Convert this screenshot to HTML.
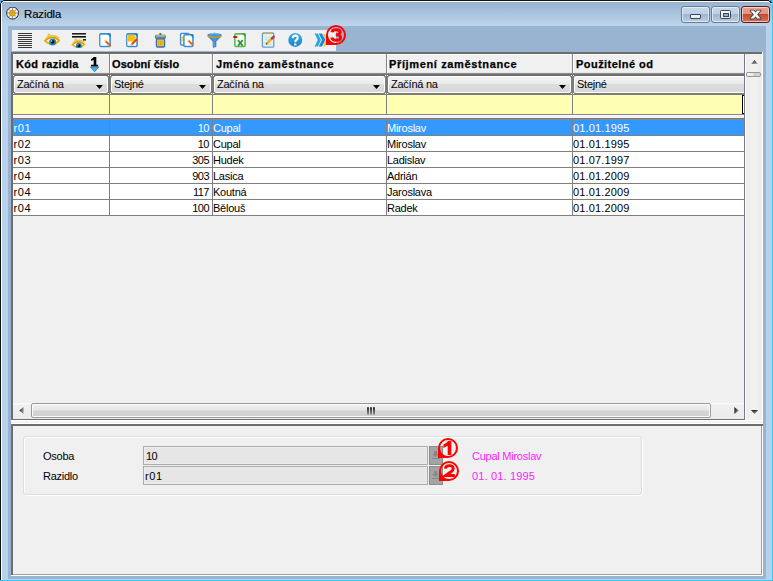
<!DOCTYPE html>
<html><head><meta charset="utf-8">
<style>
*{box-sizing:border-box;margin:0;padding:0}
html,body{width:773px;height:581px;overflow:hidden;background:#b9d1ea}
body{position:relative;font-family:"Liberation Sans",sans-serif;font-size:11px;color:#000}
.a{position:absolute}
.t{position:absolute;white-space:nowrap;line-height:13px}
</style></head><body>
<div class="a" style="left:0px;top:0px;width:773px;height:581px;background:#b9d1ea"></div>
<div class="a" style="left:0px;top:2px;width:772px;height:24px;background:linear-gradient(#99b4d1,#bdd4eb)"></div>
<div class="a" style="left:0px;top:0px;width:772px;height:1px;background:#141414"></div>
<div class="a" style="left:0px;top:0px;width:1px;height:580px;background:#141414"></div>
<div class="a" style="left:1px;top:1px;width:771px;height:1px;background:#fff"></div>
<div class="a" style="left:1px;top:1px;width:1px;height:579px;background:#fff"></div>
<div class="a" style="left:772px;top:0px;width:1px;height:581px;background:#2fcdef"></div>
<div class="a" style="left:0px;top:580px;width:773px;height:1px;background:#2fcdef"></div>
<div class="a" style="left:8px;top:26px;width:758px;height:553px;background:#99b4d1"></div>
<div class="a" style="left:0px;top:0px;width:1px;height:1px;background:#5aa8f0"></div>
<div class="a" style="left:1px;top:0px;width:1px;height:1px;background:#5aa8f0"></div>
<div class="a" style="left:2px;top:0px;width:1px;height:1px;background:#5aa8f0"></div>
<div class="a" style="left:3px;top:0px;width:1px;height:1px;background:#3a3a3a"></div>
<div class="a" style="left:0px;top:1px;width:1px;height:1px;background:#5aa8f0"></div>
<div class="a" style="left:0px;top:2px;width:1px;height:1px;background:#5aa8f0"></div>
<div class="a" style="left:0px;top:3px;width:1px;height:1px;background:#3a3a3a"></div>
<div class="a" style="left:1px;top:1px;width:1px;height:1px;background:#2a2a2a"></div>
<div class="a" style="left:2px;top:1px;width:1px;height:1px;background:#2a2a2a"></div>
<div class="a" style="left:1px;top:2px;width:1px;height:1px;background:#2a2a2a"></div>
<div class="a" style="left:2px;top:2px;width:1px;height:1px;background:#cfdbe8"></div>
<div class="a" style="left:769px;top:0px;width:1px;height:1px;background:#5aa8f0"></div>
<div class="a" style="left:770px;top:0px;width:1px;height:1px;background:#5aa8f0"></div>
<div class="a" style="left:771px;top:0px;width:1px;height:1px;background:#5aa8f0"></div>
<div class="a" style="left:769px;top:1px;width:1px;height:1px;background:#2a2a2a"></div>
<div class="a" style="left:770px;top:1px;width:1px;height:1px;background:#2a2a2a"></div>
<div class="a" style="left:771px;top:1px;width:1px;height:1px;background:#5aa8f0"></div>
<div class="a" style="left:770px;top:2px;width:1px;height:1px;background:#2a2a2a"></div>
<div class="a" style="left:771px;top:2px;width:1px;height:1px;background:#2a2a2a"></div>
<div class="a" style="left:769px;top:2px;width:1px;height:1px;background:#cfe8f0"></div>
<div class="a" style="left:771px;top:3px;width:1px;height:1px;background:#bfe8f5"></div>
<div class="t" style="left:24px;top:8px;font-size:11.4px;-webkit-text-stroke:0.15px #000;letter-spacing:-0.1px">Razidla</div>
<svg class="a" style="left:6px;top:7px" width="13" height="13" viewBox="0 0 13 13"><circle cx="6.6" cy="6.1" r="6" fill="#f2f2f2" stroke="#1e1e28" stroke-width="0.9"/><path d="M6.6 6.1 L12.60 6.10" stroke="#50505a" stroke-width="0.6"/><path d="M6.6 6.1 L10.84 10.34" stroke="#50505a" stroke-width="0.6"/><path d="M6.6 6.1 L6.60 12.10" stroke="#50505a" stroke-width="0.6"/><path d="M6.6 6.1 L2.36 10.35" stroke="#50505a" stroke-width="0.6"/><path d="M6.6 6.1 L0.60 6.11" stroke="#50505a" stroke-width="0.6"/><path d="M6.6 6.1 L2.35 1.87" stroke="#50505a" stroke-width="0.6"/><path d="M6.6 6.1 L6.59 0.10" stroke="#50505a" stroke-width="0.6"/><path d="M6.6 6.1 L10.83 1.85" stroke="#50505a" stroke-width="0.6"/><circle cx="6.4" cy="6.2" r="2.9" fill="#f2b800" stroke="#5a4a20" stroke-width="0.4"/><circle cx="6.2" cy="6" r="0.8" fill="#a07010"/></svg>
<div class="a" style="left:681px;top:6px;width:29px;height:17px;background:linear-gradient(#c6d7ea 0%,#bdd0e5 45%,#9cb6d1 46%,#b8cde3 100%);border:1px solid #6a7d92;border-radius:3px;box-shadow:inset 0 0 0 1px rgba(255,255,255,.55)"></div>
<div class="a" style="left:690px;top:14px;width:11px;height:5px;background:#eee;border:1px solid #3c4656;border-radius:1px"></div>
<div class="a" style="left:711px;top:6px;width:29px;height:17px;background:linear-gradient(#c6d7ea 0%,#bdd0e5 45%,#9cb6d1 46%,#b8cde3 100%);border:1px solid #6a7d92;border-radius:3px;box-shadow:inset 0 0 0 1px rgba(255,255,255,.55)"></div>
<div class="a" style="left:720px;top:10px;width:11px;height:9px;background:linear-gradient(#fafafa,#e6e6e6);border:1px solid #3c4656;border-radius:1.5px"></div><div class="a" style="left:723px;top:13px;width:6px;height:4px;background:#8ab0d0;border:1px solid #3c4656"></div>
<div class="a" style="left:741px;top:6px;width:29px;height:17px;background:linear-gradient(#e8a190 0%,#e19580 45%,#c44a2c 46%,#d86f55 100%);border:1px solid #5a1d1d;border-radius:3px;box-shadow:inset 0 0 0 1px rgba(255,255,255,.55)"></div>
<svg class="a" style="left:749px;top:9px" width="13" height="11" viewBox="0 0 13 11"><g stroke="#343c4c" stroke-width="1.6" stroke-linejoin="round" fill="#343c4c"><path d="M1.4 1.6 H4.7 L11.6 9.6 H8.3 Z"/><path d="M8.3 1.6 H11.6 L4.7 9.6 H1.4 Z"/></g><g fill="#f8f8f8"><path d="M1.4 1.6 H4.7 L11.6 9.6 H8.3 Z"/><path d="M8.3 1.6 H11.6 L4.7 9.6 H1.4 Z"/></g></svg>
<div class="a" style="left:12px;top:30px;width:324px;height:21px;background:#f0f0f0"></div>
<svg class="a" style="left:17px;top:32px" width="16" height="16" viewBox="0 0 16 16"><rect x="1" y="1" width="14" height="1" fill="#3a3a3a"/><rect x="1" y="3" width="14" height="1" fill="#3a3a3a"/><rect x="1" y="5" width="14" height="1" fill="#3a3a3a"/><rect x="1" y="7" width="14" height="1" fill="#3a3a3a"/><rect x="1" y="9" width="14" height="1" fill="#3a3a3a"/><rect x="1" y="11" width="14" height="1" fill="#3a3a3a"/><rect x="1" y="13" width="14" height="1" fill="#3a3a3a"/><rect x="1" y="15" width="14" height="1" fill="#3a3a3a"/></svg>
<svg class="a" style="left:44px;top:32px" width="16" height="16" viewBox="0 0 16 16"><path d="M0.9 8.8 Q7 1.8 15.3 8.4 Q9 15.8 0.9 8.8 Z" fill="#f4f4f0" stroke="#e4aa08" stroke-width="1.7"/><path d="M1.6 6.6 Q8 0.6 15.2 6.2" fill="none" stroke="#eec030" stroke-width="1.3"/><path d="M2.5 8 Q8 3.6 14.5 7.6" fill="none" stroke="#d89a00" stroke-width="0.9"/><circle cx="8.6" cy="10.1" r="3.5" fill="#2886b4"/><circle cx="8.7" cy="9.9" r="1.8" fill="#050505"/><circle cx="7.7" cy="9" r="0.7" fill="#fff"/><path d="M3.8 4.2 L4.6 1.6 M5.4 3.3 L5.8 1.8" stroke="#e4aa08" stroke-width="0.9"/></svg>
<svg class="a" style="left:71px;top:32px" width="16" height="16" viewBox="0 0 16 16"><rect x="1" y="1" width="14" height="1.6" fill="#222"/><rect x="1" y="4" width="14" height="1.6" fill="#111"/><rect x="12" y="7" width="3" height="1.6" fill="#222"/><g transform="translate(0.5,5.2) scale(0.85)"><path d="M0.9 8.8 Q7 1.8 15.3 8.4 Q9 15.8 0.9 8.8 Z" fill="#f4f4f0" stroke="#e4aa08" stroke-width="1.7"/><path d="M1.6 6.6 Q8 0.6 15.2 6.2" fill="none" stroke="#eec030" stroke-width="1.3"/><path d="M2.5 8 Q8 3.6 14.5 7.6" fill="none" stroke="#d89a00" stroke-width="0.9"/><circle cx="8.6" cy="10.1" r="3.5" fill="#2886b4"/><circle cx="8.7" cy="9.9" r="1.8" fill="#050505"/><circle cx="7.7" cy="9" r="0.7" fill="#fff"/><path d="M3.8 4.2 L4.6 1.6 M5.4 3.3 L5.8 1.8" stroke="#e4aa08" stroke-width="0.9"/></g></svg>
<svg class="a" style="left:98px;top:32px" width="16" height="16" viewBox="0 0 16 16"><rect x="1.9" y="1.9" width="10.2" height="12.6" rx="1.2" fill="#fff" stroke="#3a8fd2" stroke-width="1.6"/><path d="M8.8 1.4 H12.6 V5.2 Z" fill="#1f7cc8"/><path d="M2.9 3 V13.6" stroke="#d8ecfa" stroke-width="1"/><path d="M7.6 9.2 L12.6 14" stroke="#e2601c" stroke-width="2"/><path d="M6.6 8.2 L7.8 9.4" stroke="#f0d088" stroke-width="1.8"/></svg>
<svg class="a" style="left:125px;top:32px" width="16" height="16" viewBox="0 0 16 16"><rect x="1.9" y="1.9" width="10.2" height="12.6" rx="1.2" fill="#fff" stroke="#3a8fd2" stroke-width="1.6"/><path d="M8.8 1.4 H12.6 V5.2 Z" fill="#1f7cc8"/><path d="M2.9 3 V13.6" stroke="#d8ecfa" stroke-width="1"/><path d="M3 3 H9.5 L10.6 4.6 V9.4 H3 Z" fill="#f8c00e"/><path d="M6.8 12.2 L12.2 7" stroke="#d84a1a" stroke-width="2"/><path d="M5.8 13.2 L6.9 12.1" stroke="#d8b060" stroke-width="1.6"/></svg>
<svg class="a" style="left:152px;top:32px" width="16" height="16" viewBox="0 0 16 16"><rect x="4.4" y="6.8" width="8.2" height="8.2" rx="1.2" fill="#f4c21c" stroke="#3a70b8" stroke-width="1.3"/><rect x="3.4" y="3.2" width="10" height="3.4" rx="0.8" fill="#4a86c8" stroke="#3a70b8" stroke-width="0.8"/><rect x="4" y="3.3" width="8.8" height="1.3" fill="#f6c820"/><rect x="7.2" y="1.1" width="2.4" height="2" rx="0.8" fill="#3a70b8"/><path d="M6.7 8.5 V13.5 M8.5 8.5 V13.5 M10.3 8.5 V13.5" stroke="#d9a214" stroke-width="0.8"/></svg>
<svg class="a" style="left:179px;top:32px" width="16" height="16" viewBox="0 0 16 16"><rect x="1.6" y="1.4" width="8.6" height="11.6" rx="1" fill="#fff" stroke="#3a8fd2" stroke-width="1.4"/><rect x="2.6" y="5" width="1.2" height="4.5" fill="#f6c21a"/><rect x="4.9" y="2.7" width="9" height="11.8" rx="1" fill="#fff" stroke="#3a8fd2" stroke-width="1.5"/><path d="M10.6 2.2 H14.3 V5.9 Z" fill="#1f7cc8"/><path d="M9.4 8.6 L13.8 13" stroke="#e2601c" stroke-width="1.9"/><path d="M8.6 7.8 L9.6 8.8" stroke="#f0d088" stroke-width="1.6"/></svg>
<svg class="a" style="left:206px;top:32px" width="16" height="16" viewBox="0 0 16 16"><path d="M1.8 2.6 Q8.5 -0.4 15.2 2.6 L15 4.4 L10 9.4 L10 14.6 L7.2 15.4 L7 9.4 L2 4.4 Z" fill="#3a96d8" stroke="#2868a8" stroke-width="0.6"/><path d="M2 4.2 Q8.5 6.2 15 4.2" fill="none" stroke="#e49a0c" stroke-width="1.4"/><path d="M3.5 2.2 Q8.5 0.8 13.5 2.2" fill="none" stroke="#8ccaf2" stroke-width="1"/><path d="M8 10 V14.5" stroke="#6ab8ee" stroke-width="0.8"/></svg>
<svg class="a" style="left:233px;top:32px" width="16" height="16" viewBox="0 0 16 16"><rect x="1.9" y="1.9" width="10.2" height="12.6" rx="1.2" fill="#fff" stroke="#5cb452" stroke-width="1.6"/><path d="M8.8 1.4 H12.6 V5.2 Z" fill="#3aa040"/><rect x="0.3" y="4" width="4" height="2" rx="0.6" fill="#cc1010"/><path d="M4.9 8.2 L9.8 13.8 M9.6 8.2 L4.9 13.8" stroke="#2a9a34" stroke-width="1.8"/></svg>
<svg class="a" style="left:260px;top:32px" width="16" height="16" viewBox="0 0 16 16"><rect x="2.4" y="1" width="11.4" height="14.2" rx="1.2" fill="#e6f3fb" stroke="#6c9cc6" stroke-width="1.3"/><path d="M4 5.2 H12.5 M4 7.6 H12.5 M4 10 H12.5 M4 12.4 H12.5" stroke="#bcdaee" stroke-width="0.8"/><path d="M4 1.4 h1.6 M7 1.4 h1.6 M10 1.4 h1.6" stroke="#e8b830" stroke-width="1.6"/><path d="M7 11.4 L12.2 6.2" stroke="#f2b412" stroke-width="2.6"/><path d="M12 6.4 L13.6 4.8" stroke="#c83030" stroke-width="2.4" stroke-linecap="round"/><path d="M6.2 12.2 L7.2 11.2" stroke="#704020" stroke-width="1.6"/></svg>
<svg class="a" style="left:287px;top:32px" width="16" height="16" viewBox="0 0 16 16"><defs><linearGradient id="hg" x1="0" y1="0" x2="0" y2="1"><stop offset="0" stop-color="#3cace8"/><stop offset="1" stop-color="#1984c6"/></linearGradient></defs><circle cx="8.25" cy="7.9" r="7" fill="url(#hg)"/><path d="M5.8 6.1 Q5.9 3.6 8.4 3.6 Q10.9 3.7 10.7 6 Q10.5 7.3 9.2 8.1 Q8.2 8.8 8.3 10.2" fill="none" stroke="#fff" stroke-width="2"/><rect x="7.2" y="11.5" width="2.2" height="2" fill="#fff"/></svg>
<svg class="a" style="left:314px;top:32px" width="16" height="16" viewBox="0 0 16 16"><path d="M0.6 1.4 H3.8 L7 8 L3.8 14.6 H0.6 L3.8 8 Z" fill="#22a8e6"/><path d="M4.7 1.4 H8 L11.4 8 L8 14.6 H4.7 L8 8 Z" fill="#1c8ad0"/><path d="M9.2 2 H10.8 L13.4 8 L10.8 14.6 H9.2 L11.8 8 Z" fill="#f4c010"/></svg>
<div class="a" style="left:11px;top:52px;width:752px;height:372px;background:#ffffff"></div>
<div class="a" style="left:11px;top:52px;width:751px;height:2px;background:#6d6d6d"></div>
<div class="a" style="left:11px;top:52px;width:2px;height:368px;background:#6d6d6d"></div>
<div class="a" style="left:13px;top:54px;width:732px;height:366px;background:#767b82"></div>
<div class="a" style="left:13px;top:54px;width:731px;height:365px;background:#f0f0f0"></div>
<div class="a" style="left:11px;top:419px;width:734px;height:1px;background:#6f6f6f"></div>
<div class="a" style="left:11px;top:421px;width:752px;height:2px;background:#f3f3f3"></div>
<div class="a" style="left:13px;top:54px;width:731px;height:19px;background:#f0f0f0"></div>
<div class="a" style="left:13px;top:54px;width:731px;height:1px;background:#ffffff"></div>
<div class="a" style="left:13px;top:73px;width:731px;height:22px;background:#7c7c7c"></div>
<div class="a" style="left:13px;top:73px;width:731px;height:1px;background:#8e8e8e"></div>
<div class="a" style="left:13px;top:74px;width:731px;height:2px;background:#6e6e6e"></div>
<div class="a" style="left:13px;top:72px;width:731px;height:1px;background:#e6e6e6"></div>
<div class="a" style="left:109px;top:54px;width:1px;height:19px;background:#858585"></div>
<div class="a" style="left:110px;top:54px;width:1px;height:19px;background:#ffffff"></div>
<div class="a" style="left:212px;top:54px;width:1px;height:19px;background:#858585"></div>
<div class="a" style="left:213px;top:54px;width:1px;height:19px;background:#ffffff"></div>
<div class="a" style="left:386px;top:54px;width:1px;height:19px;background:#858585"></div>
<div class="a" style="left:387px;top:54px;width:1px;height:19px;background:#ffffff"></div>
<div class="a" style="left:572px;top:54px;width:1px;height:19px;background:#858585"></div>
<div class="a" style="left:573px;top:54px;width:1px;height:19px;background:#ffffff"></div>
<div class="t" style="left:16px;top:58px;font-size:11px;font-weight:bold;letter-spacing:0.32px;-webkit-text-stroke:0.25px #000">Kód razidla</div>
<div class="t" style="left:112px;top:58px;font-size:11px;font-weight:bold;letter-spacing:0.1px;-webkit-text-stroke:0.25px #000">Osobní číslo</div>
<div class="t" style="left:216px;top:58px;font-size:11px;font-weight:bold;letter-spacing:0.62px;-webkit-text-stroke:0.25px #000">Jméno zaměstnance</div>
<div class="t" style="left:389px;top:58px;font-size:11px;font-weight:bold;letter-spacing:0.64px;-webkit-text-stroke:0.25px #000">Příjmení zaměstnance</div>
<div class="t" style="left:576px;top:58px;font-size:11px;font-weight:bold;letter-spacing:0.45px;-webkit-text-stroke:0.25px #000">Použitelné od</div>
<svg class="a" style="left:90px;top:56px" width="10" height="11" viewBox="0 0 10 11"><path d="M3.7 0.9 H6.3 V8.7 H8.1 V10.5 H1 V8.7 H3.7 V3.9 Q2.5 4.5 1.1 4.7 V2.9 Q3 2.3 3.7 0.9 Z" fill="#000"/></svg>
<svg class="a" style="left:90px;top:66px" width="10" height="7" viewBox="0 0 10 7"><path d="M0.3 0.9 H9 L4.6 5.8 Z" fill="#35b8f0" stroke="#1a4a78" stroke-width="0.5"/></svg>
<div class="a" style="left:14px;top:76px;width:94px;height:17px;background:linear-gradient(#f3f3f3 0%,#ececec 42%,#dedede 50%,#d7d7d7 100%);border:1px solid #fff;border-radius:2px;"></div>
<div class="t" style="left:17px;top:78px;font-size:11px;letter-spacing:-0.25px;">Začíná na</div>
<svg class="a" style="left:96px;top:85px" width="7" height="4"><path d="M0 0 L7 0 L3.5 4 Z" fill="#000"/></svg>
<div class="a" style="left:111px;top:76px;width:100px;height:17px;background:linear-gradient(#f3f3f3 0%,#ececec 42%,#dedede 50%,#d7d7d7 100%);border:1px solid #fff;border-radius:2px;"></div>
<div class="t" style="left:114px;top:78px;font-size:11px;letter-spacing:-0.25px;">Stejné</div>
<svg class="a" style="left:199px;top:85px" width="7" height="4"><path d="M0 0 L7 0 L3.5 4 Z" fill="#000"/></svg>
<div class="a" style="left:214px;top:76px;width:171px;height:17px;background:linear-gradient(#f3f3f3 0%,#ececec 42%,#dedede 50%,#d7d7d7 100%);border:1px solid #fff;border-radius:2px;"></div>
<div class="t" style="left:217px;top:78px;font-size:11px;letter-spacing:-0.25px;">Začíná na</div>
<svg class="a" style="left:373px;top:85px" width="7" height="4"><path d="M0 0 L7 0 L3.5 4 Z" fill="#000"/></svg>
<div class="a" style="left:388px;top:76px;width:183px;height:17px;background:linear-gradient(#f3f3f3 0%,#ececec 42%,#dedede 50%,#d7d7d7 100%);border:1px solid #fff;border-radius:2px;"></div>
<div class="t" style="left:391px;top:78px;font-size:11px;letter-spacing:-0.25px;">Začíná na</div>
<svg class="a" style="left:559px;top:85px" width="7" height="4"><path d="M0 0 L7 0 L3.5 4 Z" fill="#000"/></svg>
<div class="a" style="left:574px;top:76px;width:170px;height:17px;background:linear-gradient(#f3f3f3 0%,#ececec 42%,#dedede 50%,#d7d7d7 100%);border:1px solid #fff;border-radius:2px;border-right:0;border-radius:2px 0 0 2px;"></div>
<div class="t" style="left:577px;top:78px;font-size:11px;letter-spacing:-0.25px;">Stejné</div>
<div class="a" style="left:108px;top:75px;width:1px;height:1px;background:#ffffff"></div>
<div class="a" style="left:110px;top:75px;width:1px;height:1px;background:#ffffff"></div>
<div class="a" style="left:108px;top:93px;width:1px;height:1px;background:#ffffff"></div>
<div class="a" style="left:110px;top:93px;width:1px;height:1px;background:#ffffff"></div>
<div class="a" style="left:211px;top:75px;width:1px;height:1px;background:#ffffff"></div>
<div class="a" style="left:213px;top:75px;width:1px;height:1px;background:#ffffff"></div>
<div class="a" style="left:211px;top:93px;width:1px;height:1px;background:#ffffff"></div>
<div class="a" style="left:213px;top:93px;width:1px;height:1px;background:#ffffff"></div>
<div class="a" style="left:385px;top:75px;width:1px;height:1px;background:#ffffff"></div>
<div class="a" style="left:387px;top:75px;width:1px;height:1px;background:#ffffff"></div>
<div class="a" style="left:385px;top:93px;width:1px;height:1px;background:#ffffff"></div>
<div class="a" style="left:387px;top:93px;width:1px;height:1px;background:#ffffff"></div>
<div class="a" style="left:571px;top:75px;width:1px;height:1px;background:#ffffff"></div>
<div class="a" style="left:573px;top:75px;width:1px;height:1px;background:#ffffff"></div>
<div class="a" style="left:571px;top:93px;width:1px;height:1px;background:#ffffff"></div>
<div class="a" style="left:573px;top:93px;width:1px;height:1px;background:#ffffff"></div>
<div class="a" style="left:13px;top:75px;width:1px;height:1px;background:#ffffff"></div>
<div class="a" style="left:13px;top:93px;width:1px;height:1px;background:#ffffff"></div>
<div class="a" style="left:13px;top:95px;width:731px;height:19px;background:#ffffb4"></div>
<div class="a" style="left:109px;top:95px;width:1px;height:19px;background:#808080"></div>
<div class="a" style="left:212px;top:95px;width:1px;height:19px;background:#808080"></div>
<div class="a" style="left:386px;top:95px;width:1px;height:19px;background:#808080"></div>
<div class="a" style="left:572px;top:95px;width:1px;height:19px;background:#808080"></div>
<div class="a" style="left:742px;top:95px;width:1px;height:19px;background:#000"></div>
<div class="a" style="left:743px;top:95px;width:1px;height:19px;background:#fff"></div>
<div class="a" style="left:743px;top:95px;width:1px;height:1px;background:#000"></div>
<div class="a" style="left:743px;top:113px;width:1px;height:1px;background:#000"></div>
<div class="a" style="left:13px;top:114px;width:731px;height:1px;background:#84858c"></div>
<div class="a" style="left:13px;top:115px;width:731px;height:3px;background:#f2f2f3"></div>
<div class="a" style="left:13px;top:115px;width:731px;height:1px;background:#fafafa"></div>
<div class="a" style="left:13px;top:118px;width:731px;height:1px;background:#7a7b82"></div>
<div class="a" style="left:13px;top:119px;width:731px;height:1px;background:#888990"></div>
<div class="a" style="left:13px;top:120px;width:731px;height:15px;background:#3399ff"></div>
<div class="a" style="left:13px;top:135px;width:731px;height:1px;background:#808080"></div>
<div class="a" style="left:109px;top:120px;width:1px;height:16px;background:#808080"></div>
<div class="a" style="left:212px;top:120px;width:1px;height:16px;background:#808080"></div>
<div class="a" style="left:386px;top:120px;width:1px;height:16px;background:#808080"></div>
<div class="a" style="left:572px;top:120px;width:1px;height:16px;background:#808080"></div>
<div class="t" style="left:13.5px;top:122px;font-size:11px;letter-spacing:0.6px;color:#fff">r01</div>
<div class="t" style="right:564px;top:122px;font-size:11px;text-align:right;letter-spacing:-0.5px;color:#fff">10</div>
<div class="t" style="left:213px;top:122px;font-size:11px;letter-spacing:-0.25px;color:#fff">Cupal</div>
<div class="t" style="left:387px;top:122px;font-size:11px;letter-spacing:-0.25px;color:#fff">Miroslav</div>
<div class="t" style="left:573px;top:122px;font-size:11px;letter-spacing:0.15px;color:#fff">01.01.1995</div>
<div class="a" style="left:13px;top:136px;width:731px;height:15px;background:#ffffff"></div>
<div class="a" style="left:13px;top:151px;width:731px;height:1px;background:#808080"></div>
<div class="a" style="left:109px;top:136px;width:1px;height:16px;background:#808080"></div>
<div class="a" style="left:212px;top:136px;width:1px;height:16px;background:#808080"></div>
<div class="a" style="left:386px;top:136px;width:1px;height:16px;background:#808080"></div>
<div class="a" style="left:572px;top:136px;width:1px;height:16px;background:#808080"></div>
<div class="t" style="left:13.5px;top:138px;font-size:11px;letter-spacing:0.6px;">r02</div>
<div class="t" style="right:564px;top:138px;font-size:11px;text-align:right;letter-spacing:-0.5px;">10</div>
<div class="t" style="left:213px;top:138px;font-size:11px;letter-spacing:-0.25px;">Cupal</div>
<div class="t" style="left:387px;top:138px;font-size:11px;letter-spacing:-0.25px;">Miroslav</div>
<div class="t" style="left:573px;top:138px;font-size:11px;letter-spacing:0.15px;">01.01.1995</div>
<div class="a" style="left:13px;top:152px;width:731px;height:15px;background:#ffffff"></div>
<div class="a" style="left:13px;top:167px;width:731px;height:1px;background:#808080"></div>
<div class="a" style="left:109px;top:152px;width:1px;height:16px;background:#808080"></div>
<div class="a" style="left:212px;top:152px;width:1px;height:16px;background:#808080"></div>
<div class="a" style="left:386px;top:152px;width:1px;height:16px;background:#808080"></div>
<div class="a" style="left:572px;top:152px;width:1px;height:16px;background:#808080"></div>
<div class="t" style="left:13.5px;top:154px;font-size:11px;letter-spacing:0.6px;">r03</div>
<div class="t" style="right:564px;top:154px;font-size:11px;text-align:right;letter-spacing:-0.5px;">305</div>
<div class="t" style="left:213px;top:154px;font-size:11px;letter-spacing:-0.25px;">Hudek</div>
<div class="t" style="left:387px;top:154px;font-size:11px;letter-spacing:-0.25px;">Ladislav</div>
<div class="t" style="left:573px;top:154px;font-size:11px;letter-spacing:0.15px;">01.07.1997</div>
<div class="a" style="left:13px;top:168px;width:731px;height:15px;background:#ffffff"></div>
<div class="a" style="left:13px;top:183px;width:731px;height:1px;background:#808080"></div>
<div class="a" style="left:109px;top:168px;width:1px;height:16px;background:#808080"></div>
<div class="a" style="left:212px;top:168px;width:1px;height:16px;background:#808080"></div>
<div class="a" style="left:386px;top:168px;width:1px;height:16px;background:#808080"></div>
<div class="a" style="left:572px;top:168px;width:1px;height:16px;background:#808080"></div>
<div class="t" style="left:13.5px;top:170px;font-size:11px;letter-spacing:0.6px;">r04</div>
<div class="t" style="right:564px;top:170px;font-size:11px;text-align:right;letter-spacing:-0.5px;">903</div>
<div class="t" style="left:213px;top:170px;font-size:11px;letter-spacing:-0.25px;">Lasica</div>
<div class="t" style="left:387px;top:170px;font-size:11px;letter-spacing:-0.25px;">Adrián</div>
<div class="t" style="left:573px;top:170px;font-size:11px;letter-spacing:0.15px;">01.01.2009</div>
<div class="a" style="left:13px;top:184px;width:731px;height:15px;background:#ffffff"></div>
<div class="a" style="left:13px;top:199px;width:731px;height:1px;background:#808080"></div>
<div class="a" style="left:109px;top:184px;width:1px;height:16px;background:#808080"></div>
<div class="a" style="left:212px;top:184px;width:1px;height:16px;background:#808080"></div>
<div class="a" style="left:386px;top:184px;width:1px;height:16px;background:#808080"></div>
<div class="a" style="left:572px;top:184px;width:1px;height:16px;background:#808080"></div>
<div class="t" style="left:13.5px;top:186px;font-size:11px;letter-spacing:0.6px;">r04</div>
<div class="t" style="right:564px;top:186px;font-size:11px;text-align:right;letter-spacing:-0.5px;">117</div>
<div class="t" style="left:213px;top:186px;font-size:11px;letter-spacing:-0.25px;">Koutná</div>
<div class="t" style="left:387px;top:186px;font-size:11px;letter-spacing:-0.25px;">Jaroslava</div>
<div class="t" style="left:573px;top:186px;font-size:11px;letter-spacing:0.15px;">01.01.2009</div>
<div class="a" style="left:13px;top:200px;width:731px;height:15px;background:#ffffff"></div>
<div class="a" style="left:13px;top:215px;width:731px;height:1px;background:#808080"></div>
<div class="a" style="left:109px;top:200px;width:1px;height:16px;background:#808080"></div>
<div class="a" style="left:212px;top:200px;width:1px;height:16px;background:#808080"></div>
<div class="a" style="left:386px;top:200px;width:1px;height:16px;background:#808080"></div>
<div class="a" style="left:572px;top:200px;width:1px;height:16px;background:#808080"></div>
<div class="t" style="left:13.5px;top:202px;font-size:11px;letter-spacing:0.6px;">r04</div>
<div class="t" style="right:564px;top:202px;font-size:11px;text-align:right;letter-spacing:-0.5px;">100</div>
<div class="t" style="left:213px;top:202px;font-size:11px;letter-spacing:-0.25px;">Bělouš</div>
<div class="t" style="left:387px;top:202px;font-size:11px;letter-spacing:-0.25px;">Radek</div>
<div class="t" style="left:573px;top:202px;font-size:11px;letter-spacing:0.15px;">01.01.2009</div>
<div class="a" style="left:13px;top:403px;width:731px;height:16px;background:linear-gradient(#fdfdfd 0,#f0f0f0 2px,#ebebeb 100%)"></div>
<div class="a" style="left:31px;top:403px;width:680px;height:15px;background:linear-gradient(#f2f2f2 0%,#e6e6e6 45%,#d5d5d5 55%,#d0d0d0 100%);border:1px solid #9a9a9a;border-radius:2px;box-shadow:inset 0 0 0 1px #fafafa"></div>
<svg class="a" style="left:19px;top:407px" width="5" height="7"><defs><linearGradient id="ga" x1="0" y1="0" x2="1" y2="0.3"><stop offset="0" stop-color="#111"/><stop offset="1" stop-color="#9a9a9a"/></linearGradient></defs><path d="M4.6 0 L4.6 7 L0.3 3.5 Z" fill="url(#ga)"/></svg>
<svg class="a" style="left:734px;top:407px" width="5" height="7"><defs><linearGradient id="gb" x1="0" y1="0" x2="1" y2="0.3"><stop offset="0" stop-color="#111"/><stop offset="1" stop-color="#8a8a8a"/></linearGradient></defs><path d="M0.4 0 L0.4 7 L4.7 3.5 Z" fill="url(#gb)"/></svg>
<div class="a" style="left:367px;top:407px;width:2px;height:8px;background:linear-gradient(#222,#9a9a9a);border-radius:1px"></div>
<div class="a" style="left:370px;top:407px;width:2px;height:8px;background:linear-gradient(#222,#9a9a9a);border-radius:1px"></div>
<div class="a" style="left:373px;top:407px;width:2px;height:8px;background:linear-gradient(#222,#9a9a9a);border-radius:1px"></div>
<div class="a" style="left:745px;top:54px;width:1px;height:366px;background:#ffffff"></div>
<div class="a" style="left:746px;top:54px;width:16px;height:366px;background:linear-gradient(90deg,#ededed,#f2f2f2 50%,#ededed)"></div>
<svg class="a" style="left:751px;top:60px" width="7" height="4"><defs><linearGradient id="gc" x1="0" y1="0" x2="0.3" y2="1"><stop offset="0" stop-color="#111"/><stop offset="1" stop-color="#9a9a9a"/></linearGradient></defs><path d="M0 4.2 L7 4.2 L3.5 0 Z" fill="url(#gc)"/></svg>
<div class="a" style="left:746px;top:72px;width:15px;height:5px;background:linear-gradient(90deg,#f8f8f8,#e6e6e6 45%,#cfcfcf 55%,#d8d8d8);border:1px solid #959595;border-radius:2px"></div>
<svg class="a" style="left:751px;top:410px" width="7" height="5"><defs><linearGradient id="gd" x1="0" y1="0" x2="0.3" y2="1"><stop offset="0" stop-color="#111"/><stop offset="1" stop-color="#9a9a9a"/></linearGradient></defs><path d="M0 0 L7 0 L3.5 4.3 Z" fill="url(#gd)"/></svg>
<div class="a" style="left:11px;top:424px;width:752px;height:152px;background:#ffffff"></div>
<div class="a" style="left:11px;top:424px;width:752px;height:2px;background:#6d6d6d"></div>
<div class="a" style="left:11px;top:424px;width:2px;height:151px;background:#6d6d6d"></div>
<div class="a" style="left:13px;top:426px;width:749px;height:149px;background:#a0a0a0"></div>
<div class="a" style="left:13px;top:426px;width:748px;height:148px;background:#f0f0f0"></div>
<div class="a" style="left:24px;top:437px;width:619px;height:59px;border:1px solid #fff;border-radius:3px"></div>
<div class="a" style="left:23px;top:436px;width:619px;height:59px;border:1px solid #d5dfe5;border-radius:3px"></div>
<div class="t" style="left:43px;top:450px;font-size:11px;letter-spacing:-0.25px;">Osoba</div>
<div class="t" style="left:43px;top:470px;font-size:11px;letter-spacing:-0.25px;">Razidlo</div>
<div class="a" style="left:143px;top:446px;width:285px;height:19px;background:#e6e6e6;border:1px solid #acacac;box-shadow:inset 0 0 0 1px #ececec"></div>
<div class="t" style="left:146px;top:450px;font-size:11px;letter-spacing:-0.5px;">10</div>
<div class="a" style="left:429px;top:446px;width:14px;height:19px;background:#a4a4a4;border:1px solid #8c8c8c"></div>
<svg class="a" style="left:431px;top:450px" width="10" height="10"><path d="M3 1 L6 1 L6 4 L8 4 L4.5 7 L1 4 L3 4 Z" fill="#888"/><path d="M1 8.5 L9 8.5" stroke="#888"/></svg>
<div class="a" style="left:143px;top:466px;width:285px;height:19px;background:#e6e6e6;border:1px solid #acacac;box-shadow:inset 0 0 0 1px #ececec"></div>
<div class="t" style="left:145px;top:470px;font-size:11px;letter-spacing:0.6px;">r01</div>
<div class="a" style="left:429px;top:466px;width:14px;height:19px;background:#a4a4a4;border:1px solid #8c8c8c"></div>
<svg class="a" style="left:431px;top:470px" width="10" height="10"><path d="M3 1 L6 1 L6 4 L8 4 L4.5 7 L1 4 L3 4 Z" fill="#888"/><path d="M1 8.5 L9 8.5" stroke="#888"/></svg>
<div class="t" style="left:472px;top:450px;font-size:11px;letter-spacing:-0.25px;color:#ff20ff">Cupal Miroslav</div>
<div class="t" style="left:472px;top:470px;font-size:11px;letter-spacing:0.15px;color:#ff20ff">01. 01. 1995</div>
<svg class="a" style="left:438px;top:438px" width="20" height="20" viewBox="0 0 20 20"><path fill-rule="evenodd" fill="#f00" d="M10 0 A10 10 0 0 1 20 10 A10 10 0 0 1 10 20 L0 20 L0 10 A10 10 0 0 1 10 0 Z M10 2 A8 8 0 0 0 2 10 A8 8 0 0 0 10 18 A8 8 0 0 0 18 10 A8 8 0 0 0 10 2 Z"/><path fill="#f00" d="M10 3 H13.3 V17 H9.7 V7.8 L5.4 10 V6.6 Q8.5 5.2 10 3 Z"/></svg>
<svg class="a" style="left:439px;top:461px" width="20" height="20" viewBox="0 0 20 20"><path fill-rule="evenodd" fill="#f00" d="M10 0 A10 10 0 0 1 20 10 A10 10 0 0 1 10 20 L0 20 L0 10 A10 10 0 0 1 10 0 Z M10 2 A8 8 0 0 0 2 10 A8 8 0 0 0 10 18 A8 8 0 0 0 18 10 A8 8 0 0 0 10 2 Z"/><path fill="none" stroke="#f00" stroke-width="2.9" stroke-linejoin="miter" d="M6.4 7.6 Q6.6 4.6 10.4 4.6 Q14.2 4.6 14.2 7.4 Q14.2 9.4 11.2 11.2 L6.6 14.5 H15.8"/></svg>
<svg class="a" style="left:326px;top:25px" width="20" height="20" viewBox="0 0 20 20"><path fill-rule="evenodd" fill="#f00" d="M10 0 A10 10 0 0 1 20 10 A10 10 0 0 1 10 20 L0 20 L0 10 A10 10 0 0 1 10 0 Z M10 2 A8 8 0 0 0 2 10 A8 8 0 0 0 10 18 A8 8 0 0 0 18 10 A8 8 0 0 0 10 2 Z"/><path fill="none" stroke="#f00" stroke-width="2.9" d="M6 7.2 Q6.4 4.7 10.3 4.7 Q14.2 4.7 14.2 7.3 Q14.2 9.9 9.8 9.9 Q14.6 9.9 14.6 12.5 Q14.6 15.3 10.3 15.3 Q6.2 15.3 5.7 12.6"/></svg>
</body></html>
